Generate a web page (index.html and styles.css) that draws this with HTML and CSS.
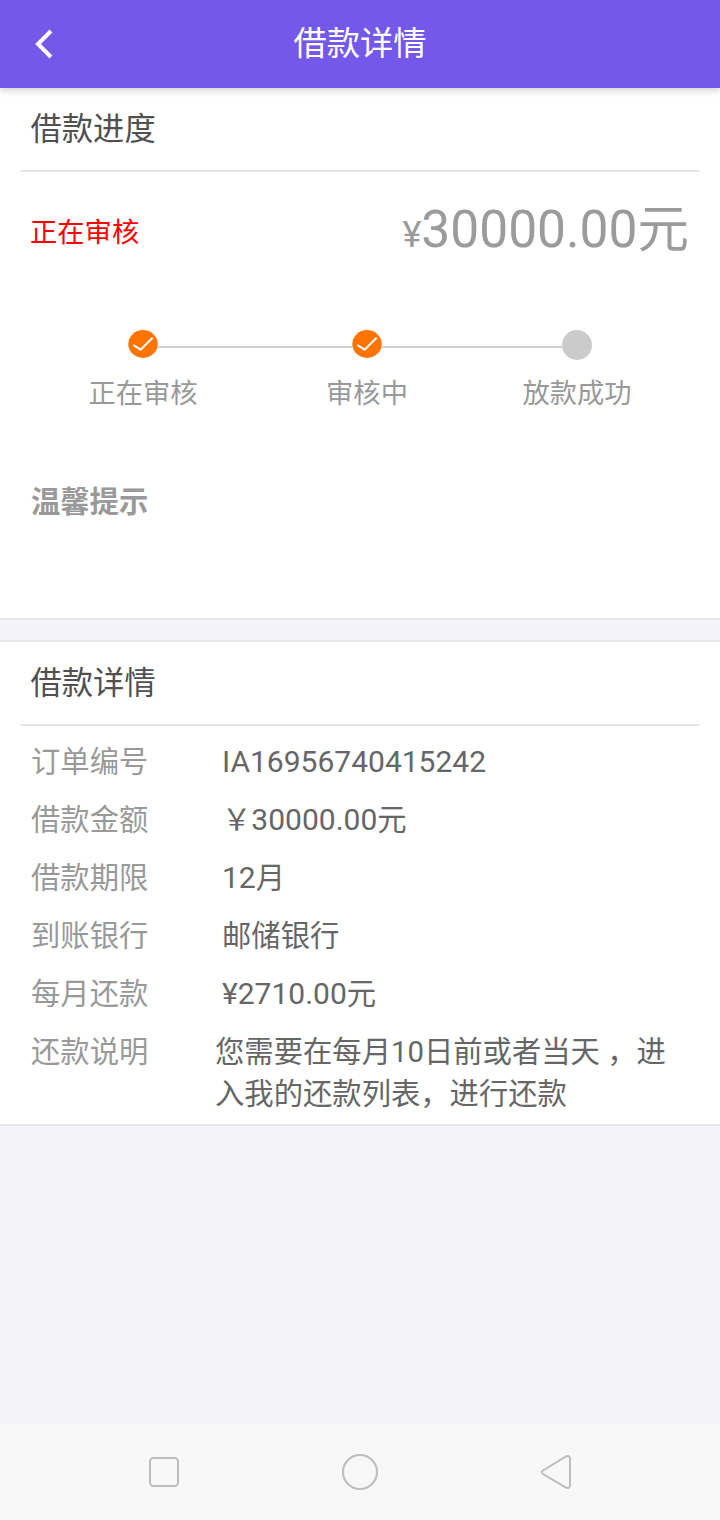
FILE: index.html
```html
<!DOCTYPE html>
<html lang="zh-CN">
<head>
  <meta charset="UTF-8">
  <meta name="viewport" content="width=device-width, initial-scale=1.0">
  <title>借款详情</title>
  <link rel="stylesheet" href="styles.css">
</head>
<body>
  <div class="page">
    <header class="topbar">
      <svg class="back" width="24" height="32" viewBox="0 0 24 32">
        <path d="M19 3 L6 16 L19 29" fill="none" stroke="#fff" stroke-width="4"/>
      </svg>
      <h1 class="topbar-title">借款详情</h1>
    </header>

    <section class="card progress-card">
      <h2 class="card-head">借款进度</h2>
      <div class="status-row">
        <span class="status">正在审核</span>
        <span class="amount"><span class="yen">¥</span>30000.00元</span>
      </div>
      <div class="steps">
        <div class="step step-1">
          <svg class="tick" width="30" height="28" viewBox="0 0 30 28">
            <ellipse cx="15" cy="14" rx="14.7" ry="13.9" fill="#ff7300"/>
            <path d="M5.300 15 L12.700 19.700 L24.700 7.700" fill="none" stroke="#fff" stroke-width="2"/>
          </svg>
          <span class="step-label">正在审核</span>
        </div>
        <div class="step step-2">
          <svg class="tick" width="30" height="28" viewBox="0 0 30 28">
            <ellipse cx="15" cy="14" rx="14.7" ry="13.9" fill="#ff7300"/>
            <path d="M5.300 15 L12.700 19.700 L24.700 7.700" fill="none" stroke="#fff" stroke-width="2"/>
          </svg>
          <span class="step-label">审核中</span>
        </div>
        <div class="step step-3">
          <span class="dot"></span>
          <span class="step-label">放款成功</span>
        </div>
        <div class="step-line line-1"></div>
        <div class="step-line line-2"></div>
      </div>
      <div class="tip">温馨提示</div>
    </section>

    <section class="card detail-card">
      <h2 class="card-head">借款详情</h2>
      <div class="rows">
        <div class="row"><span class="row-key">订单编号</span><span class="row-val num">IA16956740415242</span></div>
        <div class="row"><span class="row-key">借款金额</span><span class="row-val">￥<span class="num">30000.00</span>元</span></div>
        <div class="row"><span class="row-key">借款期限</span><span class="row-val"><span class="num">12</span>月</span></div>
        <div class="row"><span class="row-key">到账银行</span><span class="row-val">邮储银行</span></div>
        <div class="row"><span class="row-key">每月还款</span><span class="row-val"><span class="num">¥2710.00</span>元</span></div>
        <div class="row row-note"><span class="row-key">还款说明</span><span class="row-val">您需要在每月10日前或者当天 ，进入我的还款列表，进行还款</span></div>
      </div>
    </section>

    <nav class="navbar">
      <svg width="32" height="32" viewBox="0 0 32 32"><rect x="2" y="2" width="28" height="28" rx="3.5" fill="none" stroke="#bdbdbd" stroke-width="2"/></svg>
      <svg width="38" height="38" viewBox="0 0 38 38"><circle cx="19" cy="19" r="17" fill="none" stroke="#bdbdbd" stroke-width="2"/></svg>
      <svg width="32" height="38" viewBox="0 0 32 38"><path d="M3 17.5 L26 3.5 Q30 2 30 6 L30 32 Q30 36 26 34.500 L3 21 Q0.500 19 3 17.500 Z" fill="none" stroke="#bdbdbd" stroke-width="2"/></svg>
    </nav>
  </div>
</body>
</html>
```

FILE: styles.css
```css
html, body {
  margin: 0;
  padding: 0;
  background-color: #f3f3f9;
  font-family: Roboto, "Noto Sans CJK SC", sans-serif;
}
.page {
  display: flex;
  flex-direction: column;
  height: 1520px;
}
.topbar {
  position: relative;
  z-index: 1;
  display: flex;
  align-items: center;
  justify-content: center;
  height: 88px;
  background-color: #7358ea;
  box-shadow: 0 2px 8px rgba(0, 0, 0, 0.2);
}
.back {
  position: absolute;
  left: 32px;
  top: 28px;
}
.topbar-title {
  margin: 0 0 7px;
  font-size: 33.3px;
  font-weight: 400;
  color: #fff;
}
.card {
  background-color: #fff;
  border-bottom: 2px solid #e6e6e8;
}
.card-head {
  margin: 0 20px;
  padding-left: 10.5px;
  height: 82px;
  line-height: 83px;
  border-bottom: 2px solid #e6e6e6;
  font-size: 31.3px;
  font-weight: 400;
  color: #505050;
}
.progress-card {
  height: 530px;
}
.progress-card .card-head {
  line-height: 84px;
}
.status-row {
  display: flex;
  align-items: center;
  justify-content: space-between;
  padding: 30px 31px 0 30px;
  height: 56px;
}
.status {
  font-size: 27.3px;
  color: #f00;
}
.amount {
  margin-bottom: 12px;
  font-size: 51.5px;
  color: #9b9b9b;
}
.yen {
  font-size: 36px;
}
.steps {
  position: relative;
  height: 80px;
  margin-top: 72px;
}
.step {
  position: absolute;
  top: 0;
  display: flex;
  flex-direction: column;
  align-items: center;
  width: 120px;
}
.step-1 { left: 83px; }
.step-2 { left: 307px; }
.step-3 { left: 517px; }
.tick {
  display: block;
}
.dot {
  width: 30px;
  height: 30px;
  margin-bottom: -2px;
  border-radius: 50%;
  background-color: #cbcbcb;
}
.step-label {
  margin-top: 16px;
  font-size: 27.3px;
  line-height: 40px;
  color: #999;
  white-space: nowrap;
}
.step-line {
  position: absolute;
  top: 16px;
  height: 2px;
  background-color: #d0d0d0;
}
.line-1 { left: 158px; width: 194px; }
.line-2 { left: 382px; width: 180px; }
.tip {
  margin: 68px 31px 0;
  font-size: 29.3px;
  font-weight: 700;
  color: #999;
}
.detail-card {
  margin-top: 20px;
  border-top: 2px solid #e6e6e8;
}
.rows {
  display: flex;
  flex-direction: column;
  padding-top: 7px;
}
.row {
  display: flex;
  align-items: baseline;
  height: 58px;
  padding-left: 31px;
  font-size: 29.33px;
  line-height: 58px;
}
.row-key {
  width: 191px;
  flex-shrink: 0;
  color: #999;
}
.row-val {
  color: #666;
}
.num {
  font-size: 30px;
}
.row-note {
  height: auto;
  line-height: 42px;
  padding: 8px 40px 9px 31px;
}
.row-note .row-val {
  margin-left: -7px;
}
.navbar {
  display: flex;
  align-items: center;
  justify-content: space-between;
  margin-top: auto;
  height: 96px;
  padding: 0 148px;
  background-color: #f8f8f8;
}
```
